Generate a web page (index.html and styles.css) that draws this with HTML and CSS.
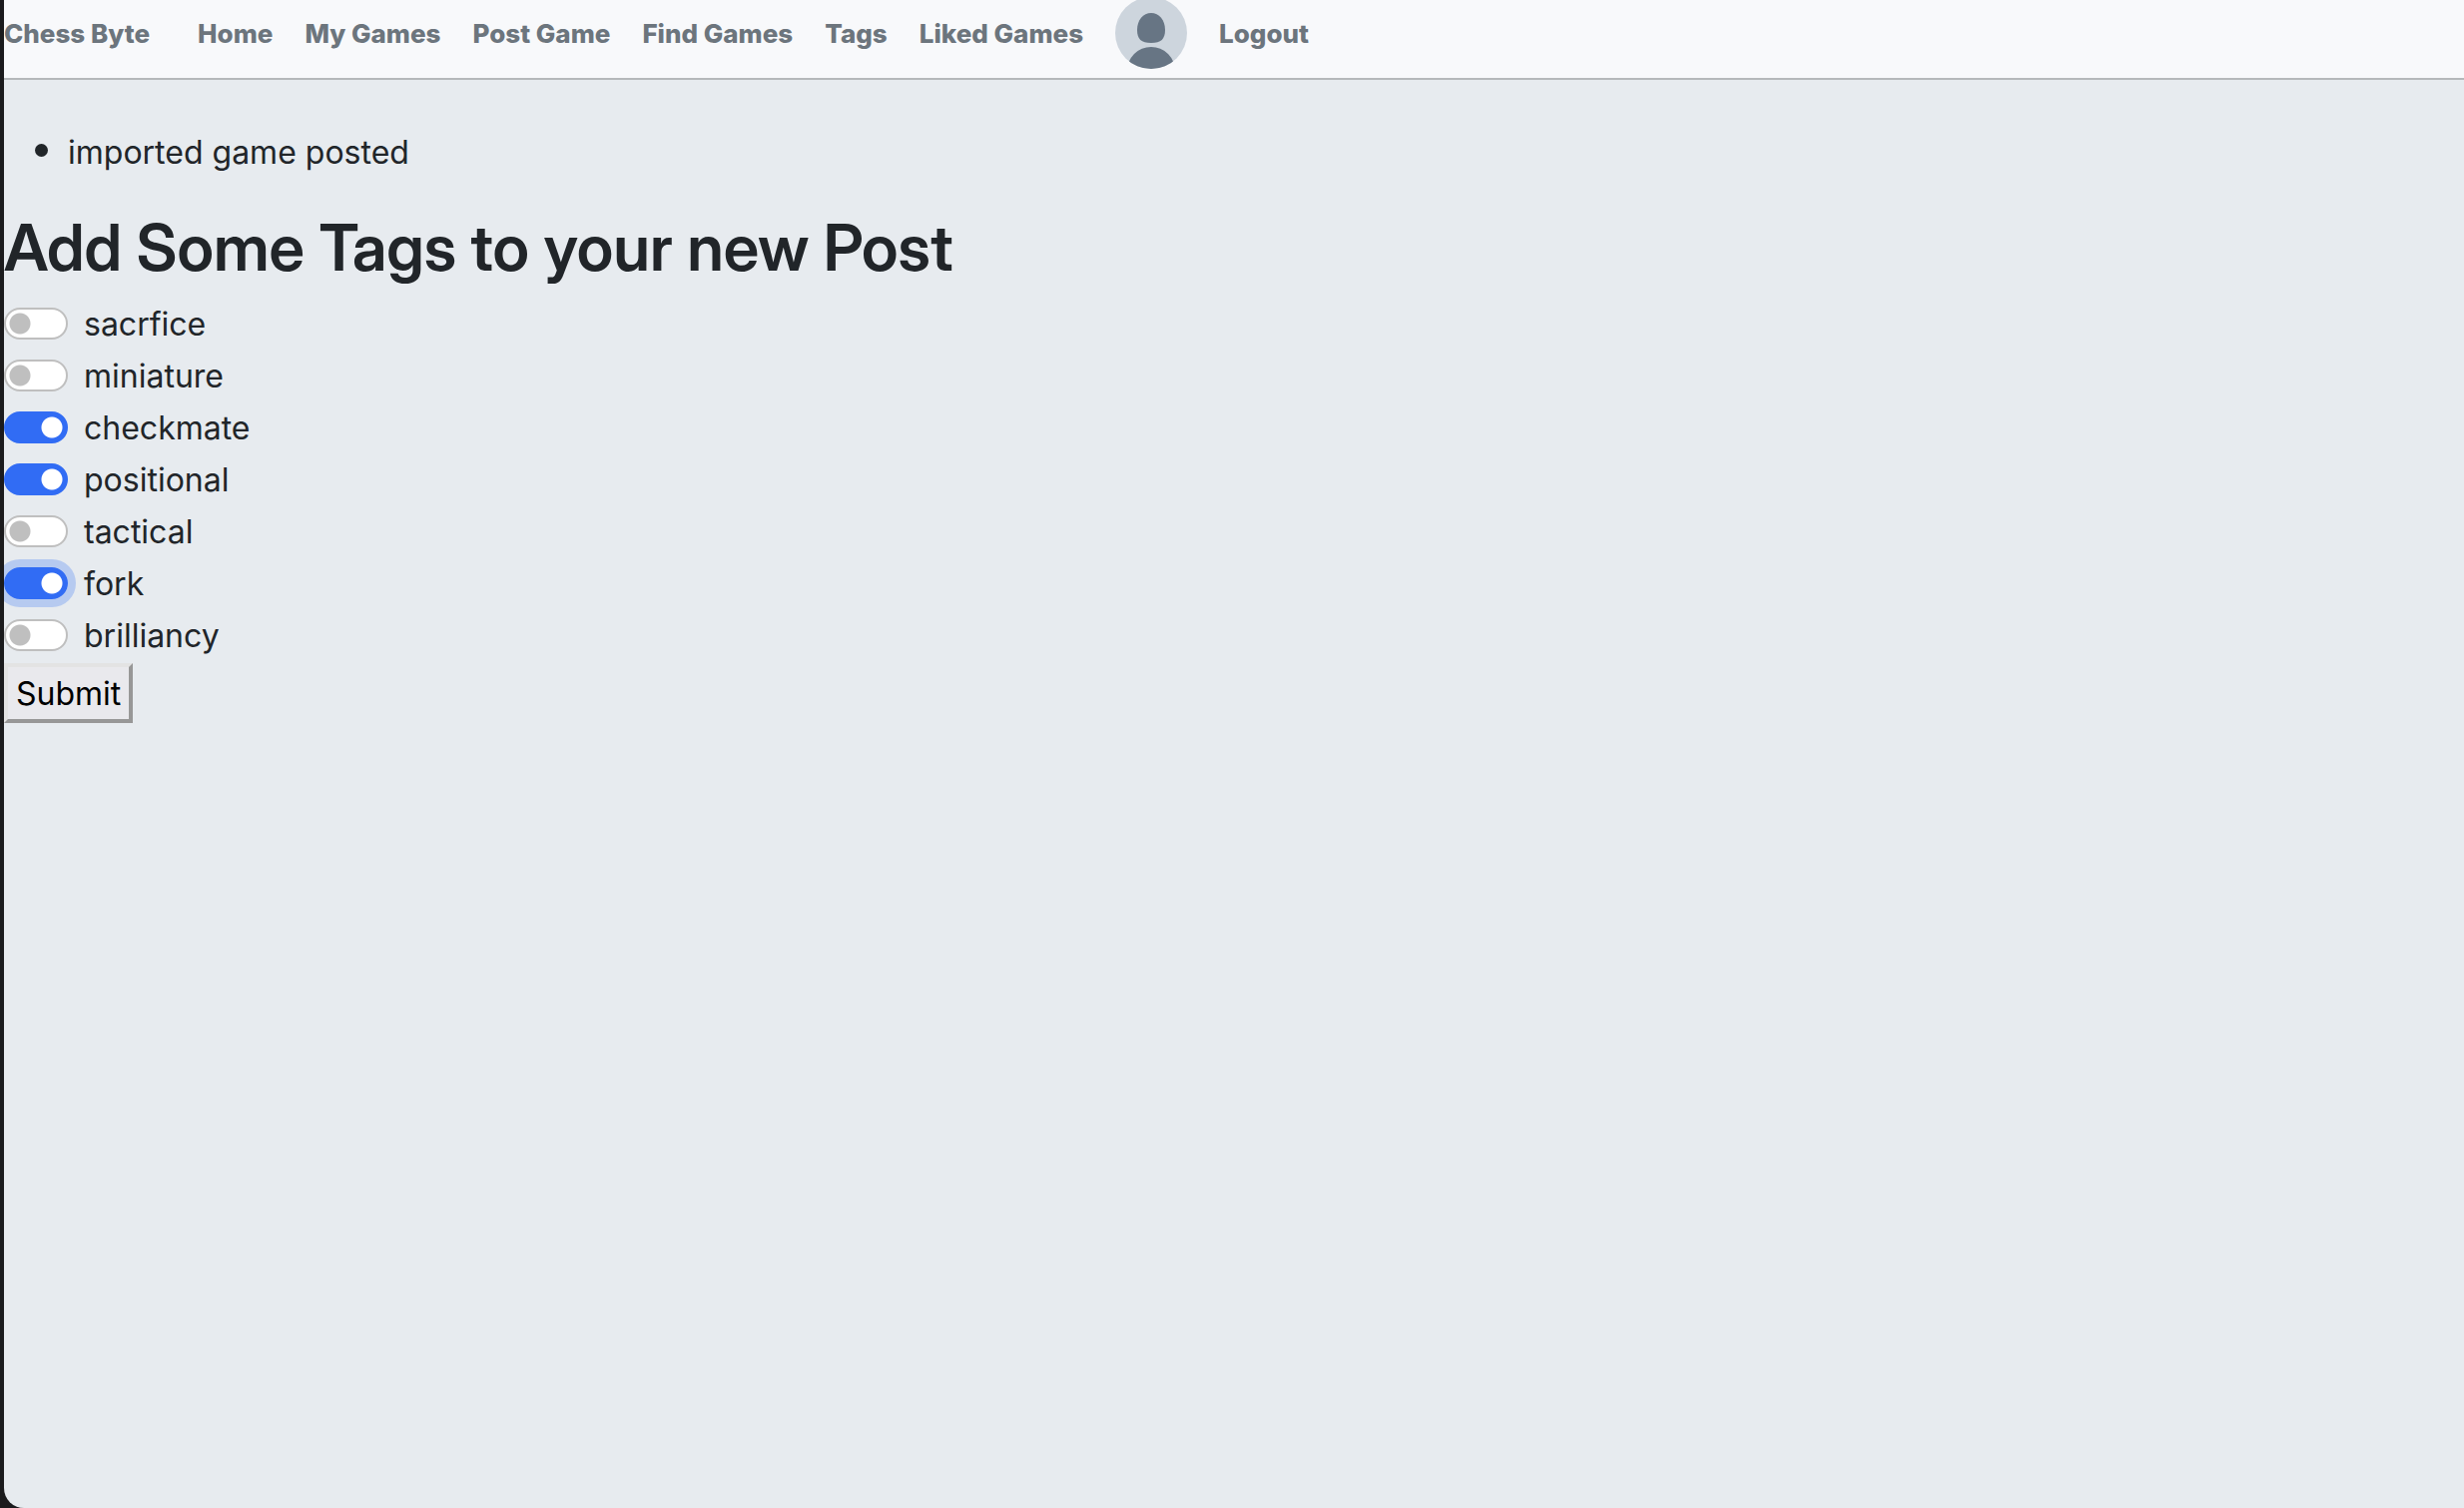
FILE: index.html
```html
<!DOCTYPE html>
<html lang="en">
<head>
<meta charset="utf-8">
<title>Chess Byte</title>
<link rel="stylesheet" href="styles.css">
</head>
<body>
<div class="window">
  <nav class="navbar">
    <a class="brand" href="#">Chess Byte</a>
    <ul class="nav-links">
      <li><a href="#">Home</a></li>
      <li><a href="#">My Games</a></li>
      <li><a href="#">Post Game</a></li>
      <li><a href="#">Find Games</a></li>
      <li><a href="#">Tags</a></li>
      <li><a href="#">Liked Games</a></li>
      <li><a class="avatar" href="#" aria-label="Profile">
        <svg viewBox="0 0 72 72" aria-hidden="true">
          <defs><clipPath id="disc"><circle cx="36" cy="36" r="36"/></clipPath></defs>
          <circle cx="36" cy="36" r="36" fill="#cdd5dd"/>
          <path d="M36 16C44 16 50 23 50 33C50 42 46 46 36 46C26 46 22 42 22 33C22 23 28 16 36 16Z" fill="#677584"/>
          <circle cx="36" cy="74" r="24" fill="#677584" clip-path="url(#disc)"/>
        </svg>
      </a></li>
      <li><a href="#">Logout</a></li>
    </ul>
  </nav>
  <main>
    <ul class="messages">
      <li>imported game posted</li>
    </ul>
    <h1>Add Some Tags to your new Post</h1>
    <form>
      <div class="switch"><input type="checkbox" id="sacrifice"><label for="sacrifice">sacrfice</label></div>
      <div class="switch"><input type="checkbox" id="miniature"><label for="miniature">miniature</label></div>
      <div class="switch"><input type="checkbox" id="checkmate" checked><label for="checkmate">checkmate</label></div>
      <div class="switch"><input type="checkbox" id="positional" checked><label for="positional">positional</label></div>
      <div class="switch"><input type="checkbox" id="tactical"><label for="tactical">tactical</label></div>
      <div class="switch"><input class="focused" type="checkbox" id="fork" checked><label for="fork">fork</label></div>
      <div class="switch"><input type="checkbox" id="brilliancy"><label for="brilliancy">brilliancy</label></div>
      <button class="submit" type="submit">Submit</button>
    </form>
  </main>
</div>
</body>
</html>
```
FILE: styles.css
```css
* { box-sizing: border-box; }

body {
  margin: 0;
  background: #1b1b1d;
  color: #212529;
  font: 400 32px/48px Inter, "Liberation Sans", sans-serif;
}

.window {
  min-height: 100vh;
  margin-left: 4px;
  border-bottom-left-radius: 20px;
  background: #e7ebef;
  overflow: hidden;
}

.navbar {
  display: flex;
  align-items: center;
  gap: 48px;
  height: 80px;
  padding-bottom: 10px;
  border-bottom: 2px solid #b5b8ba;
  background: #f8f9fb;
  font-size: 26px;
  font-weight: 800;
}

.navbar a {
  color: #6c757d;
  text-decoration: none;
}

.nav-links {
  display: flex;
  align-items: center;
  gap: 32px;
  margin: 0;
  padding: 0;
  list-style: none;
}

.avatar,
.avatar svg {
  display: block;
  width: 72px;
  height: 72px;
}

.avatar {
  margin-bottom: 2px;
}

.messages {
  margin: 0 0 32px;
  padding: 46px 0 0 64px;
}

.messages li::marker {
  font-size: 40px;
}

h1 {
  margin: 0 0 14px;
  font-family: "Inter Display", Inter, "Liberation Sans", sans-serif;
  font-size: 64px;
  font-variation-settings: "opsz" 32;
  font-weight: 600;
  line-height: 77px;
}

.switch {
  display: flex;
  align-items: center;
  gap: 16px;
  height: 48px;
  margin-bottom: 4px;
}

.switch label {
  padding-top: 2px;
}

.switch input {
  appearance: none;
  flex: none;
  width: 64px;
  height: 32px;
  margin: 0;
  border: 2px solid #bfbfbf;
  border-radius: 16px;
  background: radial-gradient(circle at 14px 50%, #bfbfbf 10px, #fff 11px);
}

.switch input:checked {
  border-color: #316cf4;
  background: radial-gradient(circle at 46px 50%, #fff 10px, #316cf4 11px);
}

.switch .focused {
  outline: none;
  box-shadow: 0 0 0 8px #b6caf0;
}

.submit {
  display: block;
  padding: 3px 8px 1px;
  border: 4px solid;
  border-color: #e3e3e3 #979797 #979797 #e3e3e3;
  background: #e9e9ed;
  color: #000;
  font: inherit;
}
```
